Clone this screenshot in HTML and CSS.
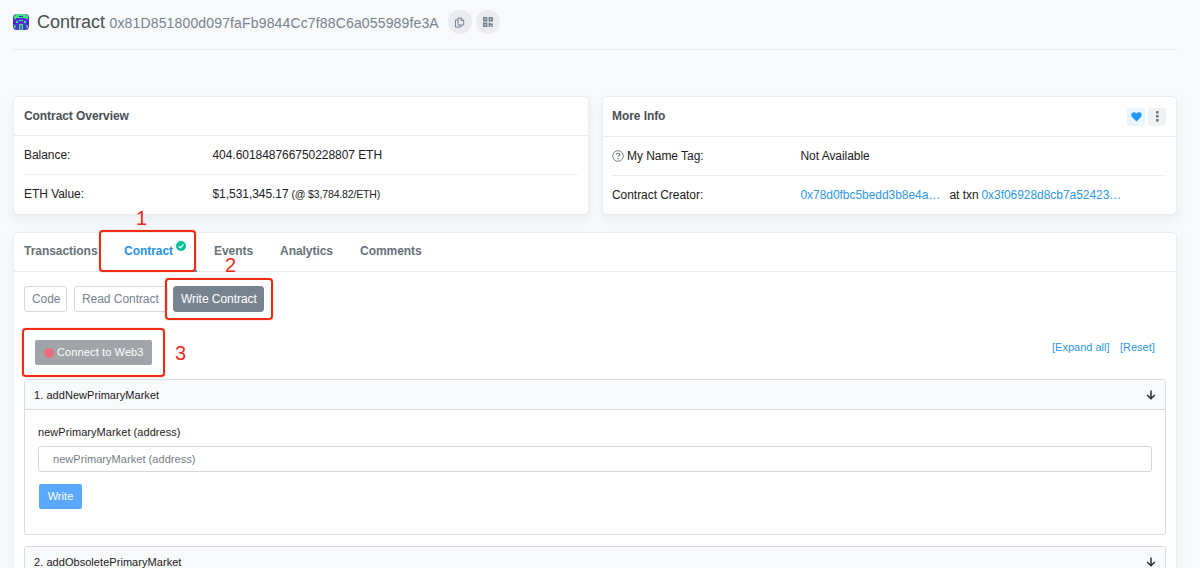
FILE: index.html
```html
<!DOCTYPE html>
<html lang="en">
<head>
<meta charset="utf-8">
<title>Contract</title>
<link rel="stylesheet" href="styles.css">
</head>
<body>
<main class="page">
  <header class="title-bar">
    <svg class="identicon" viewBox="0 0 16 16"><rect width="16" height="16" rx="4" fill="#5130d8"/><path fill="#43e37f" d="M4 0h8l3 2v3h-2V4H3v1H1V2zM3 7h2v2H3zM11 7h2v2h-2zM6 6h4v1H6zM6 10h4v6H6zM1 11h1.500v3H1zM13.500 11H15v3h-1.500z"/><path fill="#3b21b8" d="M6 2h4v1H6zM7.500 11h1v5h-1zM0 8h2v2H0zM14 8h2v2h-2z"/></svg>
    <h1 class="heading">Contract</h1>
    <span class="address">0x81D851800d097faFb9844Cc7f88C6a055989fe3A</span>
    <span class="round-button"><svg width="11" height="11" viewBox="0 0 11 11" fill="none" stroke="#77838f"><path d="M4 1h3.200L9.700 3.300V8H4zM7 1v2.500h2.500M4 3H1.500v7H7V8"/></svg></span>
    <span class="round-button"><svg width="10" height="10" viewBox="0 0 10 10" fill="#77838f"><path fill-rule="evenodd" d="M0 0h4.400v4.400H0zM1.600 1.600v1.200h1.200V1.600zM5.600 0H10v4.400H5.600zM7.200 1.600v1.200h1.200V1.600zM0 5.600h4.400V10H0zM1.600 7.200v1.200h1.200V7.200zM5.600 5.600h2v1H10v2H7.200V10H5.600zM8 9h.8v1H8zM9.200 9h.8v1h-.8z"/></svg></span>
  </header>

  <section class="cards">
    <article class="card">
      <div class="card-head"><h2 class="card-title">Contract Overview</h2></div>
      <div class="card-body">
        <div class="row"><span class="term">Balance:</span><span class="balance">404.601848766750228807 ETH</span></div>
        <div class="row"><span class="term">ETH Value:</span><span class="value">$1,531,345.17</span><span class="rate">(@ $3,784.82/ETH)</span></div>
      </div>
    </article>
    <article class="card card-info">
      <div class="card-head card-head-tall">
        <h2 class="card-title">More Info</h2>
        <span class="square-button heart"><svg width="11" height="10" viewBox="0 0 11 10"><path fill="#2196f3" d="M5.500 9.600 1 5C-1.200 2 2.400-1.600 5.500 1.500 8.600-1.600 12.200 2 10 5z"/></svg></span>
        <span class="square-button"><svg width="3" height="11" viewBox="0 0 3 11" fill="#66717c"><rect width="2.600" height="2.600" rx=".7"/><rect y="4" width="2.600" height="2.600" rx=".7"/><rect y="8" width="2.600" height="2.600" rx=".7"/></svg></span>
      </div>
      <div class="card-body">
        <div class="row"><span class="term"><svg class="help" viewBox="0 0 12 12" fill="none" stroke="#77838f"><circle cx="6" cy="6" r="5.300"/><path stroke-width="1.200" d="M4.300 4.700c0-2 3.500-1.900 3.500 0C7.800 5.900 6 5.800 6 7M6 8v1.200"/></svg><span class="name-tag">My Name Tag:</span></span><span class="available">Not Available</span></div>
        <div class="row"><span class="term creator">Contract Creator:</span><a class="creator-link">0x78d0fbc5bedd3b8e4a…</a><span class="at">at txn</span><a class="txn-link">0x3f06928d8cb7a52423…</a></div>
      </div>
    </article>
  </section>

  <section class="panel">
    <nav class="tabs">
      <a class="tab t-transactions">Transactions</a>
      <a class="tab tab-active">Contract<svg class="verified" viewBox="0 0 10 10"><circle cx="5" cy="5" r="5" fill="#00c09b"/><path d="m2.700 5.200 1.600 1.600 3.100-3.300" fill="none" stroke="#fff" stroke-width="1.200"/></svg></a>
      <a class="tab t-events">Events</a>
      <a class="tab t-analytics">Analytics</a>
      <a class="tab t-comments">Comments</a>
    </nav>
    <div class="modes">
      <span class="mode m-code"><span>Code</span></span>
      <span class="mode m-read"><span>Read Contract</span></span>
      <span class="mode m-write"><span>Write Contract</span></span>
    </div>
    <div class="connect-row">
      <span class="connect"><i class="dot"></i><span class="connect-text">Connect to Web3</span></span>
      <a class="expand">[Expand all]</a><a class="reset">[Reset]</a>
    </div>
    <div class="method">
      <div class="method-head"><span class="name-one">1. addNewPrimaryMarket</span><svg class="arrow" viewBox="0 0 10 10"><path d="M5 .5v8M1.200 5 5 8.700 8.800 5"/></svg></div>
      <div class="method-body">
        <label class="label" for="market">newPrimaryMarket (address)</label>
        <input class="field" id="market" placeholder="newPrimaryMarket (address)">
        <span class="write">Write</span>
      </div>
    </div>
    <div class="method method-next">
      <div class="method-head"><span class="name-two">2. addObsoletePrimaryMarket</span><svg class="arrow" viewBox="0 0 10 10"><path d="M5 .5v8M1.200 5 5 8.700 8.800 5"/></svg></div>
    </div>
  </section>
</main>
<div class="mark mark-one"></div><div class="mark mark-two"></div><div class="mark mark-three"></div>
<span class="step step-one">1</span><span class="step step-two">2</span><span class="step step-three">3</span>
</body>
</html>
```
FILE: styles.css
```css
* { box-sizing: border-box; }
body { margin: 0; height: 568px; overflow: hidden; position: relative; background: #f8f9fb; color: #1e2022; font: 12px/16px "Liberation Sans", Arial, sans-serif; }
h1, h2 { margin: 0; }
a { color: #2f97e6; }
span, a, label { white-space: nowrap; }
.page { width: 1164px; height: 568px; overflow: clip; overflow-clip-margin: 20px; margin-left: 13px; }
.title-bar { height: 50px; padding-bottom: 5px; border-bottom: 1px solid #e9ebef; display: flex; align-items: center; }
.identicon { width: 16px; height: 16px; margin-right: 8px; }
.heading { width: 72.500px; font-size: 18px; line-height: 24px; font-weight: 400; color: #4a4f55; }
.address { width: 338px; padding-top: 1px; font-size: 14px; line-height: 20px; letter-spacing: .15px; color: #77838f; }
.round-button { width: 24px; height: 24px; margin-right: 4px; border-radius: 50%; background: #ebecef; display: flex; align-items: center; justify-content: center; }
.cards { display: grid; grid-template-columns: 576px 575px; gap: 13px; padding-top: 46px; }
.card, .panel { background: #fff; border: 1px solid #e9ecf2; border-radius: 5px; box-shadow: 0 6px 12px rgba(140, 152, 164, .12); }
.card { height: 119px; }
.card-head { height: 39px; padding: 0 10px; display: flex; align-items: center; border-bottom: 1px solid #e7eaf3; }
.card-head-tall { height: 40px; }
.card-title { flex: 1; font-size: 12px; letter-spacing: -.07px; color: #4a4f55; }
.card-head-tall .card-title { padding-bottom: 2px; }
.square-button { width: 18px; height: 18px; margin-left: 3px; border-radius: 3px; background: #f0f1f3; display: flex; align-items: center; justify-content: center; }
.heart { background: #e8f5fd; }
.card-body { padding: 0 10px; }
.card-info .card-head, .card-info .card-body { padding-left: 9px; }
.row { height: 39px; display: flex; align-items: center; letter-spacing: -.05px; }
.row:first-child { height: 38px; }
.row + .row { border-top: 1px solid #eceef3; }
.term { width: 188.500px; flex: none; display: flex; align-items: center; }
.help { width: 12px; height: 12px; margin-right: 3px; }
.value { width: 79px; }
.rate { font-size: 10.500px; letter-spacing: -.15px; }
.creator-link { width: 149px; }
.at { width: 32px; }
.panel { height: 400px; margin-top: 17px; }
.tabs { height: 39px; padding-left: 10px; display: flex; border-bottom: 1px solid #e7eaf3; font-weight: 700; line-height: 36px; }
.tab { color: #677078; letter-spacing: -.04px; }
.t-transactions { width: 88px; }
.tab-active { width: 85px; padding-left: 12px; height: 39px; color: #2491e9; border-bottom: 2px solid #3498db; }
.verified { width: 10px; height: 10px; margin-left: 3px; vertical-align: 4px; }
.t-events { margin-left: 17px; width: 66px; }
.t-analytics { width: 80px; }
.modes { padding: 14px 0 0 10px; display: flex; }
.mode { height: 26px; padding-left: 7px; border: 1px solid #d5dae2; border-radius: 3px; color: #77838f; line-height: 24px; letter-spacing: -.05px; }
.m-code { width: 43px; margin-right: 7px; }
.m-read { width: 94px; margin-right: 5px; }
.m-write { width: 91px; color: #fff; background: #77838f; border-color: #77838f; }
.connect-row { display: flex; height: 67px; padding: 28px 22px 0 21px; font-size: 11px; line-height: 14px; }
.connect { width: 117px; height: 25px; margin-right: auto; padding-left: 9px; display: flex; align-items: center; color: #fff; background: #a0a4a9; border-radius: 2px; }
.dot { width: 10px; height: 10px; margin-right: 3px; border-radius: 50%; background: #ed6e7b; }
.connect-text { padding-bottom: 1px; letter-spacing: .12px; }
.expand { width: 68px; }
.reset { width: 34px; }
.method { height: 156px; margin: 0 10px; border: 1px solid #d9dde2; border-radius: 3px; font-size: 11px; letter-spacing: .05px; }
.method-head { height: 30px; padding: 0 9px; display: flex; align-items: center; justify-content: space-between; background: #f8f9fb; border-bottom: 1px solid #d9dde2; }
.arrow { width: 10px; height: 10px; fill: none; stroke: #292d32; stroke-width: 1.500; }
.method-body { padding: 14px 13px; display: flex; flex-direction: column; align-items: flex-start; }
.label { height: 22px; line-height: 16px; }
.field { width: 1114px; height: 26px; padding: 0 14px 1px; border: 1px solid #d1d6dc; border-radius: 3px; font: inherit; letter-spacing: inherit; background: #fff; }
.field::placeholder { color: #747e88; opacity: 1; }
.write { width: 43px; height: 25px; margin: 12px 0 0 1px; text-align: center; line-height: 25px; color: #fff; background: #5aa9ff; border-radius: 2px; }
.method-next { margin-top: 11px; height: 31px; border-bottom: 0; }
.mark { position: absolute; border: 2px solid #ee2c15; border-radius: 4px; box-shadow: 0 0 1px #ee2c15; }
.mark-one { left: 99px; top: 230px; width: 97px; height: 42px; }
.mark-two { left: 165px; top: 278px; width: 108px; height: 42px; }
.mark-three { left: 22px; top: 328px; width: 143px; height: 49px; }
.step { position: absolute; color: #ee2c15; font: 20px/24px "Liberation Sans", Arial, sans-serif; }
.step-one { left: 136px; top: 206px; }
.step-two { left: 225px; top: 253px; }
.step-three { left: 175px; top: 341px; }
```
